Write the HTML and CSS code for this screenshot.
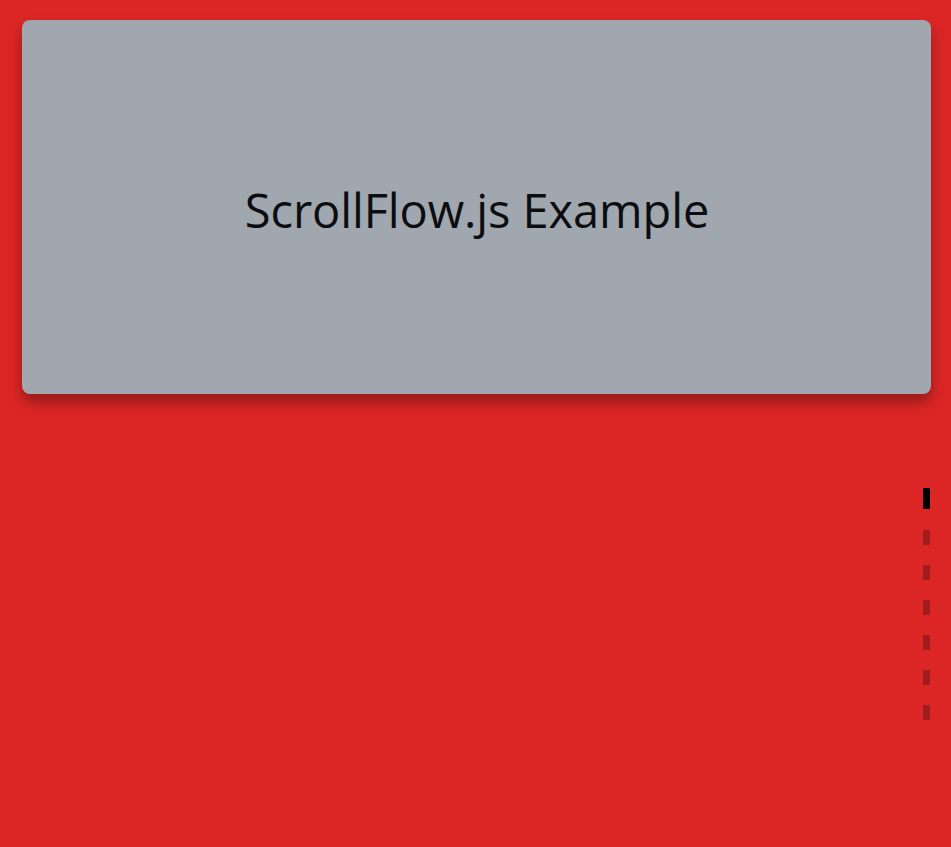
FILE: index.html
```html
<!DOCTYPE html>
<html lang="en">
<head>
    <meta charset="UTF-8">
    <meta name="viewport" content="width=device-width, initial-scale=1.0">
    <title>ScrollFlow.js Example</title>
    <link rel="stylesheet" href="styles.css">
</head>
<body>
    <section class="flow">
        <div class="card">
            <h1>ScrollFlow.js Example</h1>
        </div>
    </section>

    <nav class="pager">
        <span class="dot active"></span>
        <span class="dot"></span>
        <span class="dot"></span>
        <span class="dot"></span>
        <span class="dot"></span>
        <span class="dot"></span>
        <span class="dot"></span>
    </nav>
</body>
</html>
```

FILE: styles.css
```css
html, body{
    margin: 0;
    height: 100%;
}

body{
    background: #dc2626;
    font-family: "Open Sans", "Noto Sans", sans-serif;
    overflow: hidden;
}

.flow{
    padding: 20px 20px 0 22px;
}

.card{
    height: 374px;
    background: #a0a7ae;
    border-radius: 8px;
    box-shadow: 0 8px 14px rgba(0, 0, 0, 0.32);
    display: flex;
    align-items: center;
    justify-content: center;
}

.card h1{
    margin: 5px 0 0 1px;
    font-size: 47px;
    font-weight: 400;
    color: #0b0d10;
    letter-spacing: -0.1px;
}

/* section pager on the right edge */
.pager{
    position: fixed;
    right: 21px;
    top: 488px;
    display: flex;
    flex-direction: column;
    gap: 20px;
}

.dot{
    display: block;
    width: 7px;
    height: 15px;
    border-radius: 1px;
    background: #a11d1d;
}

.dot.active{
    height: 21px;
    background: #000;
    margin-bottom: 1px;
}
```
